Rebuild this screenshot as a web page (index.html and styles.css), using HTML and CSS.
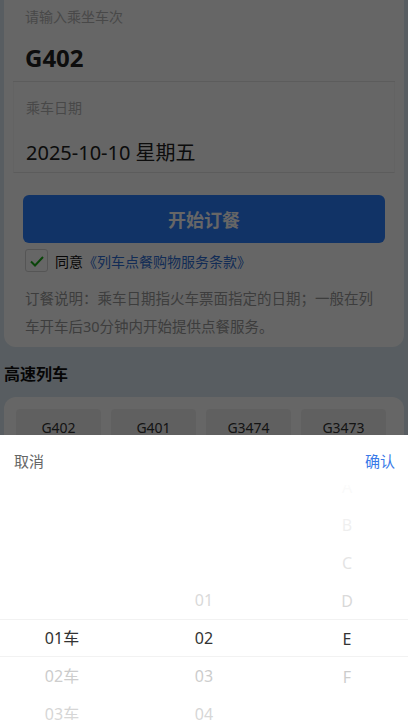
FILE: index.html
```html
<!DOCTYPE html>
<html lang="zh-CN">
<head>
    <meta charset="UTF-8">
    <meta name="viewport" content="width=device-width, initial-scale=1.0">
    <title>列车点餐</title>
    <link rel="stylesheet" href="styles.css">
</head>
<body>
    <div class="page">
        <div class="card order-card">
            <div class="field">
                <div class="field-label">请输入乘坐车次</div>
                <div class="field-value train-no">G402</div>
            </div>
            <div class="field date-field">
                <div class="field-label">乘车日期</div>
                <div class="field-value date">2025-10-10 星期五</div>
            </div>

            <button class="btn-order">开始订餐</button>

            <div class="agree">
                <span class="checkbox">
                    <svg width="16" height="16" viewBox="0 0 16 16">
                        <path d="M2 8.5 L6 12.5 L14 4" fill="none" stroke="#1aad19" stroke-width="2"/>
                    </svg>
                </span>
                <span class="agree-text">同意</span>
                <span class="agree-link">《列车点餐购物服务条款》</span>
            </div>

            <p class="note">订餐说明：乘车日期指火车票面指定的日期；一般在列车开车后30分钟内开始提供点餐服务。</p>
        </div>

        <h3 class="section-title">高速列车</h3>
        <div class="card train-card">
            <div class="train-grid">
                <div class="train-item">G402</div>
                <div class="train-item">G401</div>
                <div class="train-item">G3474</div>
                <div class="train-item">G3473</div>
            </div>
        </div>
    </div>

    <div class="mask"></div>

    <div class="sheet">
        <div class="sheet-header">
            <span class="sheet-cancel">取消</span>
            <span class="sheet-confirm">确认</span>
        </div>
        <div class="picker">
            <div class="picker-col col-carriage">
                <div class="picker-item active">01车</div>
                <div class="picker-item">02车</div>
                <div class="picker-item">03车</div>
                <div class="picker-item">04车</div>
            </div>
            <div class="picker-col col-row">
                <div class="picker-item">01</div>
                <div class="picker-item active">02</div>
                <div class="picker-item">03</div>
                <div class="picker-item">04</div>
            </div>
            <div class="picker-col col-seat">
                <div class="picker-item">A</div>
                <div class="picker-item">B</div>
                <div class="picker-item">C</div>
                <div class="picker-item">D</div>
                <div class="picker-item active">E</div>
                <div class="picker-item">F</div>
            </div>
            <div class="picker-fade"></div>
            <div class="picker-indicator"></div>
        </div>
    </div>
</body>
</html>
```

FILE: styles.css
```css
* {
    box-sizing: border-box;
}

body {
    margin: 0;
    font-family: "Noto Sans", "Noto Sans CJK SC", sans-serif;
    background: #dce9f2;
    color: #333;
    height: 720px;
    overflow: hidden;
}

.page {
    padding: 0 4px;
}

.card {
    background: #fff;
    border-radius: 12px;
}

.order-card {
    margin-top: -12px;
    padding: 12px 9px 7px;
}

.field {
    padding: 7px 12px 3px;
    border-bottom: 1px solid #e6e6e6;
}

.field-label {
    font-size: 14px;
    line-height: 20px;
    color: #b5b5b5;
}

.field-value {
    color: #222;
}

.train-no {
    margin-top: 11px;
    font-size: 24px;
    font-weight: 700;
    line-height: 40px;
}

.date-field {
    padding-top: 16px;
    padding-bottom: 1px;
    border-left: 1px solid #f8f8f8;
    border-right: 1px solid #f8f8f8;
}

.date {
    margin-top: 17px;
    font-size: 20px;
    line-height: 36px;
}

.btn-order {
    display: block;
    width: calc(100% - 20px);
    margin: 22px 10px 0;
    height: 48px;
    border: none;
    border-radius: 6px;
    background: #2b7fff;
    color: #fff;
    font-family: inherit;
    font-size: 18px;
    font-weight: 700;
}

.agree {
    display: flex;
    align-items: center;
    margin: 6px 12px 0;
    font-size: 14px;
}

.checkbox {
    width: 23px;
    height: 23px;
    border: 1px solid #d4d4d4;
    border-radius: 3px;
    display: flex;
    align-items: center;
    justify-content: center;
    margin-right: 7px;
}

.agree-text {
    color: #111;
}

.agree-link {
    color: #2f6fd6;
}

.note {
    margin: 12px 12px 0;
    padding-right: 4px;
    font-size: 14.5px;
    line-height: 28px;
    color: #9a9a9a;
}

.section-title {
    margin: 15px 0 11px;
    font-size: 16px;
    line-height: 24px;
    font-weight: 700;
    color: #111;
}

.train-card {
    padding: 12px 18px 12px 12px;
}

.train-grid {
    display: grid;
    grid-template-columns: repeat(4, 1fr);
    gap: 10px;
}

.train-item {
    height: 38px;
    line-height: 38px;
    text-align: center;
    background: #f1f1f1;
    border-radius: 4px;
    font-size: 14px;
    color: #333;
}

/* dim layer behind the popup */
.mask {
    position: fixed;
    inset: 0;
    background: rgba(0, 0, 0, 0.6);
}

.sheet {
    position: fixed;
    left: 0;
    right: 0;
    bottom: 0;
    height: 285px;
    background: #fff;
}

.sheet-header {
    display: flex;
    justify-content: space-between;
    align-items: center;
    height: 50px;
    padding: 0 13px 0 14px;
    font-size: 15px;
}

.sheet-cancel {
    color: #666;
}

.sheet-confirm {
    color: #3a7ae8;
}

.picker {
    position: relative;
    display: grid;
    grid-template-columns: repeat(3, 1fr);
    height: 235px;
    overflow: hidden;
}

.picker-col {
    text-align: center;
}

.col-carriage {
    padding-top: 134px;
    padding-right: 12px;
}

.col-row {
    padding-top: 96px;
}

.col-seat {
    margin-top: -17px;
    padding-left: 14px;
}

.picker-item {
    height: 38px;
    line-height: 38px;
    font-size: 16px;
    color: #b0b0b0;
}

.picker-item.active {
    color: #333;
}

.picker-fade {
    position: absolute;
    inset: 0;
    pointer-events: none;
    background: linear-gradient(to bottom,
        rgba(255, 255, 255, 0.95) 0,
        rgba(255, 255, 255, 0.45) 134px,
        rgba(255, 255, 255, 0) 134px,
        rgba(255, 255, 255, 0) 172px,
        rgba(255, 255, 255, 0.3) 172px,
        rgba(255, 255, 255, 0.5) 100%);
}

.picker-indicator {
    position: absolute;
    left: 0;
    right: 0;
    top: 134px;
    height: 38px;
    border-top: 1px solid #f2f2f2;
    border-bottom: 1px solid #f2f2f2;
    pointer-events: none;
}
```
